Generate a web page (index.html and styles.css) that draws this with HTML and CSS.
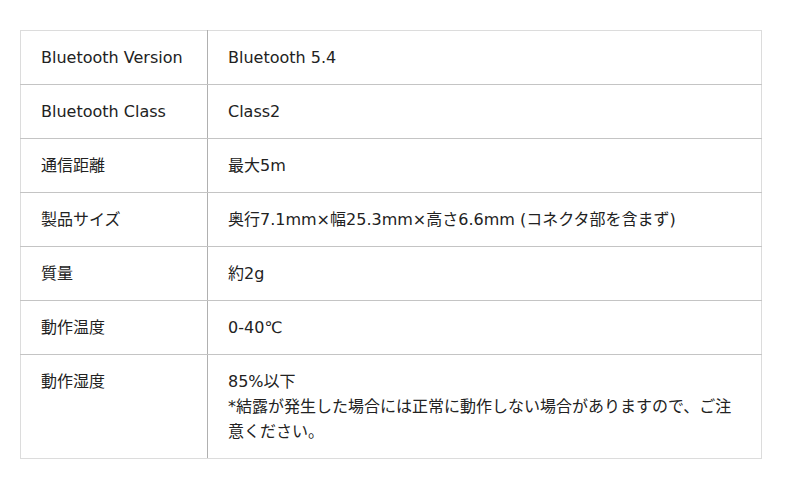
FILE: index.html
```html
<!DOCTYPE html>
<html lang="ja">
<head>
<meta charset="utf-8">
<link rel="stylesheet" href="styles.css">
</head>
<body>
<table class="spec">
  <tbody>
    <tr><th>Bluetooth Version</th><td>Bluetooth 5.4</td></tr>
    <tr><th>Bluetooth Class</th><td>Class2</td></tr>
    <tr><th>通信距離</th><td>最大5m</td></tr>
    <tr><th>製品サイズ</th><td>奥行7.1mm×幅25.3mm×高さ6.6mm (コネクタ部を含まず)</td></tr>
    <tr><th>質量</th><td>約2g</td></tr>
    <tr><th>動作温度</th><td>0-40℃</td></tr>
    <tr><th>動作湿度</th><td>85%以下<br>*結露が発生した場合には正常に動作しない場合がありますので、ご注意ください。</td></tr>
  </tbody>
</table>
</body>
</html>
```
FILE: styles.css
```css
html, body {
  margin: 0;
  padding: 0;
  background: #ffffff;
}
body {
  padding: 30px 38px 0 20px;
  font-family: "DejaVu Sans", "Noto Sans CJK JP", sans-serif;
  font-size: 16px;
  color: #222222;
}
.spec {
  width: 742px;
  border-collapse: collapse;
  border: 1px solid #dcdcdc;
}
.spec th,
.spec td {
  text-align: left;
  vertical-align: top;
  font-weight: normal;
  line-height: 25px;
  padding: 14px 20px 14px 20px;
  border-top: 1px solid #c4c4c4;
  border-bottom: 1px solid #c4c4c4;
}
.spec th {
  width: 146px;
  border-right: 1px solid #b0b0b0;
}
.spec tr:first-child th,
.spec tr:first-child td {
  border-top-color: #dcdcdc;
}
.spec tr:last-child th,
.spec tr:last-child td {
  border-bottom-color: #dcdcdc;
}
```
